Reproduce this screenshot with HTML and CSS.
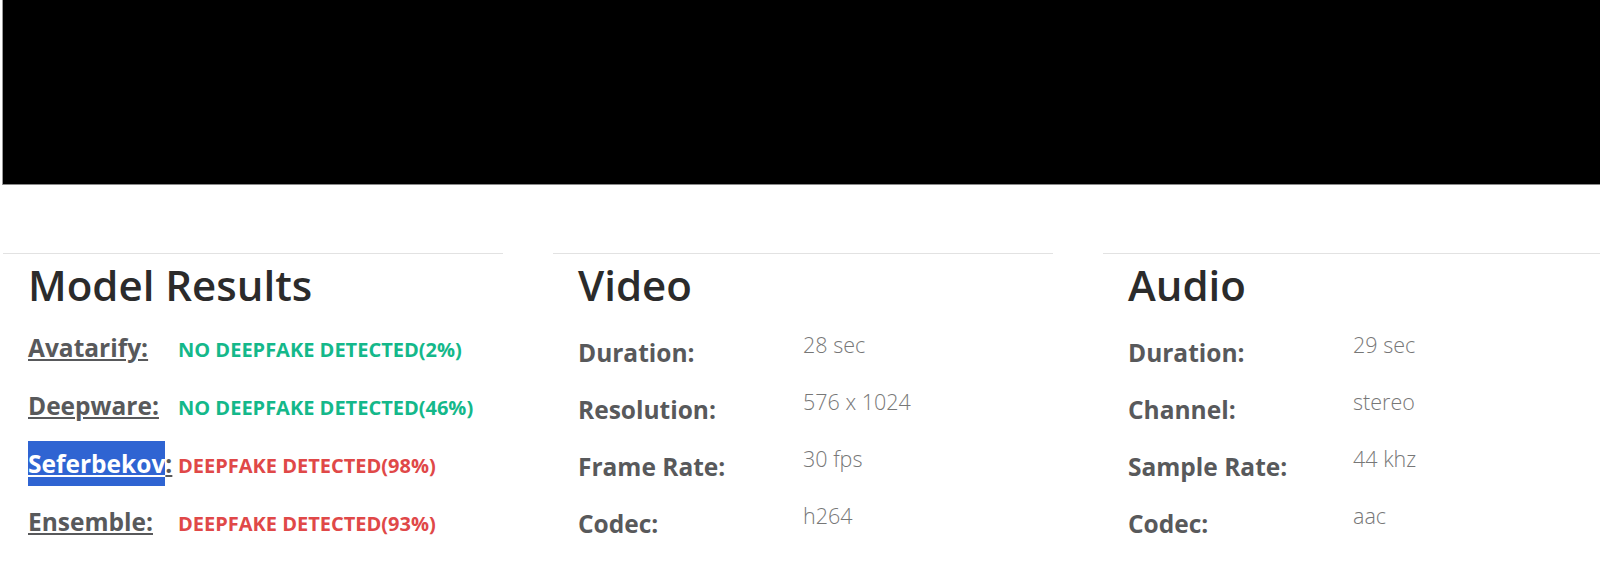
FILE: index.html
```html
<!DOCTYPE html>
<html lang="en">
<head>
<meta charset="UTF-8" />
<meta name="viewport" content="width=device-width, initial-scale=1" />
<title>Deepfake Analysis</title>
<link rel="stylesheet" href="styles.css">
</head>
<body>

<div class="player"></div>

<div class="details">
  <section class="panel">
    <h2>Model Results</h2>
    <div class="model-row">
      <a class="model-name" href="#">Avatarify:</a>
      <span class="verdict real">NO DEEPFAKE DETECTED(2%)</span>
    </div>
    <div class="model-row">
      <a class="model-name" href="#">Deepware:</a>
      <span class="verdict real">NO DEEPFAKE DETECTED(46%)</span>
    </div>
    <div class="model-row">
      <a class="model-name" href="#"><span class="selected">Seferbekov</span>:</a>
      <span class="verdict fake">DEEPFAKE DETECTED(98%)</span>
    </div>
    <div class="model-row">
      <a class="model-name" href="#">Ensemble:</a>
      <span class="verdict fake">DEEPFAKE DETECTED(93%)</span>
    </div>
  </section>

  <section class="panel">
    <h2>Video</h2>
    <div class="info-row"><span class="info-label">Duration:</span><span class="info-value">28 sec</span></div>
    <div class="info-row"><span class="info-label">Resolution:</span><span class="info-value">576 x 1024</span></div>
    <div class="info-row"><span class="info-label">Frame Rate:</span><span class="info-value">30 fps</span></div>
    <div class="info-row"><span class="info-label">Codec:</span><span class="info-value">h264</span></div>
  </section>

  <section class="panel">
    <h2>Audio</h2>
    <div class="info-row"><span class="info-label">Duration:</span><span class="info-value">29 sec</span></div>
    <div class="info-row"><span class="info-label">Channel:</span><span class="info-value">stereo</span></div>
    <div class="info-row"><span class="info-label">Sample Rate:</span><span class="info-value">44 khz</span></div>
    <div class="info-row"><span class="info-label">Codec:</span><span class="info-value">aac</span></div>
  </section>
</div>

</body>
</html>
```

FILE: styles.css
```css
body {
  margin: 0;
  font-family: 'Open Sans', 'Noto Sans', sans-serif;
  background: #fff;
  overflow: hidden;
}

.player {
  margin-left: 2px;
  height: 184px;
  background: #000;
  border-left: 1px solid #9a9a9a;
  border-bottom: 1px solid #8a8a8a;
}

.details {
  display: flex;
  gap: 50px;
  padding-left: 3px;
  margin-top: 68px;
}

.panel {
  flex: 0 0 500px;
  box-sizing: border-box;
  padding: 0 25px;
  border-top: 1px solid #e2e2e2;
}

h2 {
  margin: 6px 0 0;
  font-size: 42px;
  font-weight: 600;
  line-height: 50px;
  color: #2b2b2b;
}

/* model results */

.model-row {
  display: flex;
  align-items: baseline;
  height: 45px;
  line-height: 45px;
  margin-bottom: 13px;
}

.model-row:first-of-type {
  margin-top: 15px;
}

.model-name {
  flex: 0 0 150px;
  font-size: 24.5px;
  font-weight: 700;
  color: #58595b;
  text-decoration: underline;
}

.selected {
  display: inline-block;
  background: #2f64d2;
  color: #fff;
  text-decoration: underline;
}

.verdict {
  font-size: 20px;
  font-weight: 700;
}

.real {
  color: #14b88a;
}

.fake {
  color: #e04848;
}

/* video / audio info */

.info-row {
  display: grid;
  grid-template-columns: 225px 225px;
  height: 57px;
}

h2 + .info-row {
  margin-top: 20px;
}

.info-label {
  padding-top: 8px;
  font-size: 24.5px;
  font-weight: 700;
  line-height: 30px;
  color: #58595b;
}

.info-value {
  font-size: 21.5px;
  font-weight: 300;
  line-height: 30px;
  color: #777;
}
```
